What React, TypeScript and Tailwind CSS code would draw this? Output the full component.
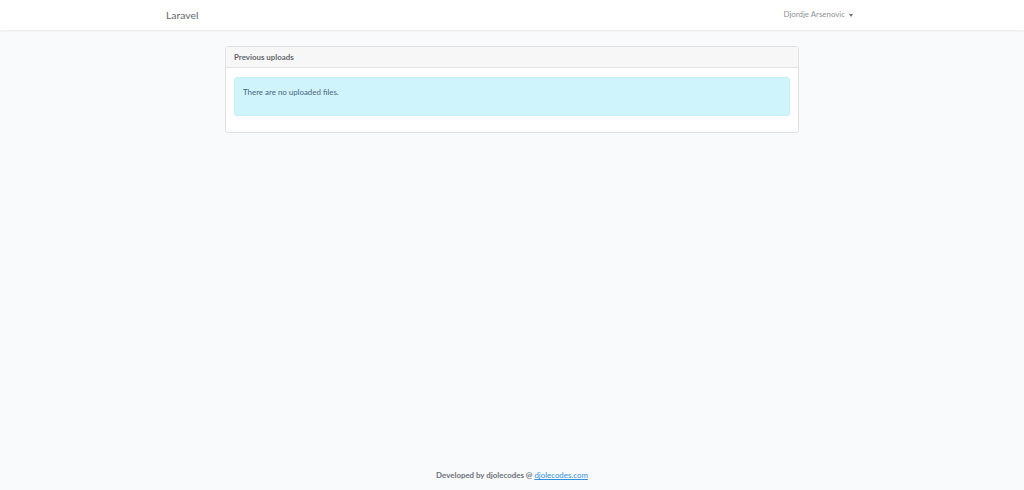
export default function App() {
  return (
    <div className="flex h-[490px] w-full flex-col overflow-hidden bg-[#f8fafc] text-[7.9px] text-[#495057] font-['Lato','Noto_Sans',sans-serif]">
      <nav className="h-[30px] shrink-0 bg-white shadow-[0_1px_2px_rgba(0,0,0,0.08)]">
        <div className="mx-auto flex h-[30px] w-[692px] items-center justify-between pr-[5px]">
          <a className="text-[10.4px] leading-none text-[#62676c]">Laravel</a>
          <div className="flex items-center gap-[4px] text-[#8f9296]">
            <span className="text-[7.9px] leading-none">Djordje Arsenovic</span>
            <span className="h-0 w-0 border-x-[2.5px] border-t-[3px] border-x-transparent border-t-[#6b6f73]" />
          </div>
        </div>
      </nav>
      <main className="flex justify-center pt-[16px]">
        <section className="flex h-[87px] w-[574px] flex-col rounded-[3px] border border-[#dfe1e3] bg-white">
          <header className="flex h-[21px] items-center border-b border-[#e2e3e4] bg-[#f7f7f7] px-[8px] pt-[2px] font-bold text-[#62676c]">
            Previous uploads
          </header>
          <div className="px-[8px] pt-[9px]">
            <div className="h-[39px] rounded-[3px] border border-[#c6eef8] bg-[#cff4fc] px-[8px] pt-[8px] leading-[12px] text-[#4a6784]">
              There are no uploaded files.
            </div>
          </div>
        </section>
      </main>
      <footer className="mt-auto flex justify-center pb-[9px] font-bold leading-[12px] text-[#6c7277]">
        <span>
          Developed by djolecodes @ <a className="font-normal text-[#3490dc] underline">djolecodes.com</a>
        </span>
      </footer>
    </div>
  );
}
